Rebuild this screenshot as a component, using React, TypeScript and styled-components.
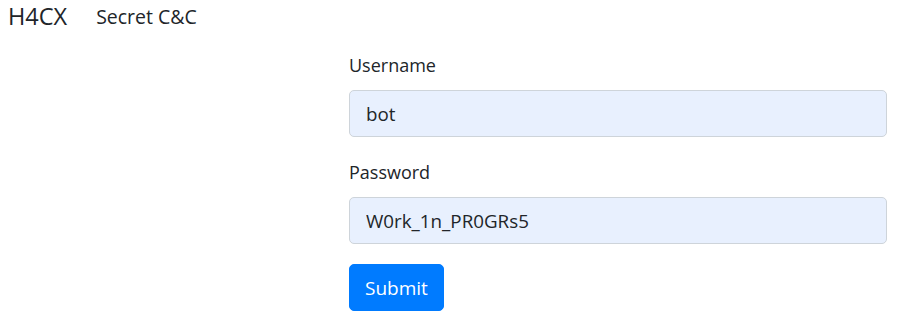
import React from "react";
import styled, { createGlobalStyle } from "styled-components";

const Global = createGlobalStyle`
  html, body { margin: 0; padding: 0; background: #fff; }
  body {
    font-family: "Open Sans", "Noto Sans", "Liberation Sans", sans-serif;
    color: #212529;
  }
  * { box-sizing: border-box; }
`;

const Navbar = styled.nav`
  display: flex;
  align-items: center;
  height: 33px;
  padding: 0 8px;
  gap: 29px;
`;

const Brand = styled.span`
  font-size: 23.5px;
  color: #212529;
  line-height: 1;
`;

const NavLink = styled.span`
  font-size: 19.5px;
  line-height: 1;
  color: #212529;
`;

const Main = styled.main`
  display: flex;
  justify-content: flex-end;
  padding: 17px 13px 0 0;
`;

const Form = styled.form`
  width: 538px;
  display: flex;
  flex-direction: column;
`;

const Group = styled.div`
  display: flex;
  flex-direction: column;
  margin-bottom: 20px;
`;

const Label = styled.label`
  font-size: 18px;
  line-height: 30px;
  margin-bottom: 10px;
  color: #212529;
`;

const Input = styled.input`
  height: 47px;
  width: 100%;
  padding: 0 16px;
  font-family: inherit;
  font-size: 18.8px;
  color: #212529;
  background: #e8f0fe;
  border: 1px solid #ced4da;
  border-radius: 5px;
  outline: none;
`;

const Button = styled.button`
  align-self: flex-start;
  height: 47px;
  padding: 0 15px;
  font-family: inherit;
  font-size: 19px;
  color: #fff;
  background: #007bff;
  border: 1px solid #007bff;
  border-radius: 5px;
`;

export default function App() {
  return (
    <>
      <Global />
      <Navbar>
        <Brand>H4CX</Brand>
        <NavLink>Secret C&amp;C</NavLink>
      </Navbar>
      <Main>
        <Form onSubmit={(e) => e.preventDefault()}>
          <Group>
            <Label>Username</Label>
            <Input type="text" defaultValue="bot" />
          </Group>
          <Group>
            <Label>Password</Label>
            <Input type="text" defaultValue="W0rk_1n_PR0GRs5" />
          </Group>
          <Button type="submit">Submit</Button>
        </Form>
      </Main>
    </>
  );
}
